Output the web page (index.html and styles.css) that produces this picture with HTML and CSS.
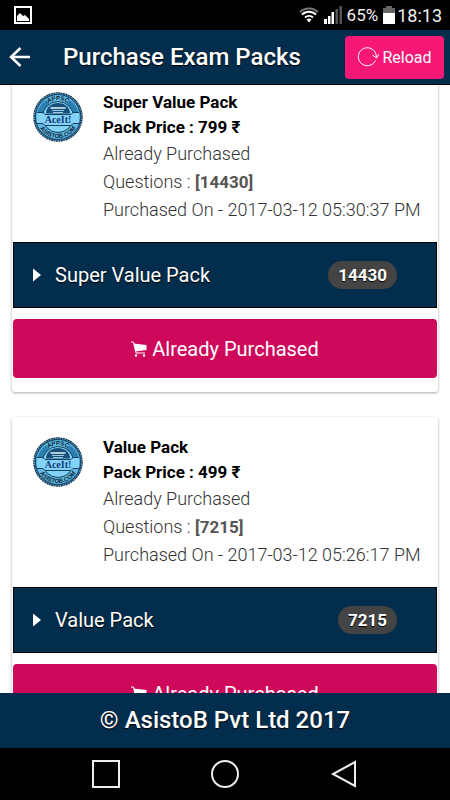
FILE: index.html
```html
<!DOCTYPE html>
<html lang="en">
<head>
    <meta charset="UTF-8">
    <title>Purchase Exam Packs</title>
    <meta name="viewport" content="width=device-width, initial-scale=1">
    <link rel="stylesheet" href="styles.css">
</head>
<body>
    <!-- shared icons -->
    <svg class="defs" aria-hidden="true">
        <defs>
            <path id="seal-top" d="M8 25a17 17 0 0 1 34 0"/>
            <path id="seal-bottom" d="M4 25a21 21 0 0 0 42 0"/>
        </defs>
        <symbol id="seal" viewBox="0 0 50 50">
            <circle cx="25" cy="25" r="23.500" fill="#174f78"/>
            <circle cx="25" cy="25" r="24" fill="none" stroke="#123e5c" stroke-width="1.500" stroke-dasharray="2 .5"/>
            <circle cx="25" cy="25" r="22" fill="#5fb9e4"/>
            <path d="M4.500 20a21 21 0 0 1 9-12l4 5a15 15 0 0 0-6 8zM45.500 20a21 21 0 0 0-9-12l-4 5a15 15 0 0 1 6 8z" fill="#2a7fb0"/>
            <circle cx="25" cy="25" r="15.500" fill="#83d3f7" stroke="#123e5c"/>
            <path d="M13 21.500a12 10.500 0 0 1 24 0z" fill="#174f78"/>
            <path d="M17.500 16h15" stroke="#e4f4fc" stroke-width="1.500"/>
            <path d="M19 18.500h12M20 20.500h10" stroke="#9cc9e2"/>
            <path d="M4 20.500h6l2 2h26l2-2h6v11h-6l-2 2H12l-2-2H4z" fill="#83d3f7"/>
            <path d="M4 20.500h6l2 2h26l2-2h6M4 31.500h6l2 2h26l2-2h6" fill="none" stroke="#123e5c"/>
        </symbol>
        <symbol id="cart" viewBox="0 0 16 16">
            <path d="M0 1h2.500l2.500 11h9" fill="none" stroke="#fff" stroke-width="1"/>
            <path d="M2.500 2.500L15.500 4v5L4.500 10.500z" fill="#fff"/>
            <circle cx="5" cy="14.500" r="1.200" fill="#fff"/>
            <circle cx="13" cy="14.500" r="1.200" fill="#fff"/>
        </symbol>
        <symbol id="caret" viewBox="0 0 8 14">
            <path d="M0 0.500v13L8 7z" fill="#fff"/>
        </symbol>
    </svg>

    <div class="status-bar">
        <svg class="picture" width="18" height="18" viewBox="0 0 18 18">
            <path d="M1 1h16v16H1z" fill="none" stroke="#fff" stroke-width="2"/>
            <path d="M3 15V10l3-3 3 3 2-1 4 4v2z" fill="#fff"/>
        </svg>
        <svg width="20" height="16" viewBox="0 0 20 16">
            <g fill="none" stroke="#fff" stroke-width="2">
                <path d="M1 5a13 13 0 0 1 18 0" stroke="#777"/>
                <path d="M3 7.500a10 10 0 0 1 14 0"/>
                <path d="M6 10.500a6 6 0 0 1 8 0"/>
            </g>
            <path d="M7.500 12.500a4 4 0 0 1 5 0L10 15.500z" fill="#fff"/>
        </svg>
        <svg class="signal" width="18" height="18" viewBox="0 0 18 18">
            <path d="M0 13h3v5H0zM4 10h2.500v8H4zM7.500 6H10v12H7.500z" fill="#fff"/>
            <path d="M11.500 3H14v15h-2.500zM15.500 0H18v18h-2.500z" fill="#555"/>
        </svg>
        <span class="percent">65%</span>
        <svg class="battery" width="12" height="18" viewBox="0 0 12 18">
            <path d="M3 0h6v2h3v5H0V2h3z" fill="#666"/>
            <path d="M0 7h12v11H0z" fill="#fff"/>
        </svg>
        <span class="time">18:13</span>
    </div>

    <header>
        <button class="back" type="button" aria-label="Back">
            <svg width="22" height="20" viewBox="0 0 22 20">
                <path d="M11.500 1L2 10l9.500 9M2 10h19" fill="none" stroke="#fff" stroke-width="2.500"/>
            </svg>
        </button>
        <h1>Purchase Exam Packs</h1>
        <button class="reload" type="button">
            <svg width="22" height="20" viewBox="0 0 22 20">
                <path d="M18.500 13.500a9 9 0 1 1 .8-4.500v2M15.500 8l4 3 2.500-4" fill="none" stroke="#fff" stroke-width="1"/>
            </svg>
            Reload
        </button>
    </header>

    <main>
        <div class="card">
            <div class="pack">
                <svg class="seal" viewBox="0 0 50 50">
                    <use href="#seal"/>
                    <text class="seal-ring"><textPath href="#seal-top" startOffset="50%">APPSC</textPath></text>
                    <text class="seal-ring"><textPath href="#seal-bottom" startOffset="50%">ASISTOB.COM</textPath></text>
                    <text class="seal-name" x="25" y="31">AceIt!</text>
                </svg>
                <div>
                    <h2>Super Value Pack</h2>
                    <h2>Pack Price : 799 ₹</h2>
                    <p>Already Purchased</p>
                    <p>Questions : <strong>[14430]</strong></p>
                    <p>Purchased On - 2017-03-12 05:30:37 PM</p>
                </div>
            </div>
            <button class="expand" type="button">
                <svg class="caret"><use href="#caret"/></svg>
                <span class="name">Super Value Pack</span>
                <span class="count">14430</span>
            </button>
            <button class="buy" type="button">
                <svg class="cart"><use href="#cart"/></svg>
                Already Purchased
            </button>
        </div>

        <div class="card">
            <div class="pack">
                <svg class="seal" viewBox="0 0 50 50">
                    <use href="#seal"/>
                    <text class="seal-ring"><textPath href="#seal-top" startOffset="50%">APPSC</textPath></text>
                    <text class="seal-ring"><textPath href="#seal-bottom" startOffset="50%">ASISTOB.COM</textPath></text>
                    <text class="seal-name" x="25" y="31">AceIt!</text>
                </svg>
                <div>
                    <h2>Value Pack</h2>
                    <h2>Pack Price : 499 ₹</h2>
                    <p>Already Purchased</p>
                    <p>Questions : <strong>[7215]</strong></p>
                    <p>Purchased On - 2017-03-12 05:26:17 PM</p>
                </div>
            </div>
            <button class="expand" type="button">
                <svg class="caret"><use href="#caret"/></svg>
                <span class="name">Value Pack</span>
                <span class="count">7215</span>
            </button>
            <button class="buy" type="button">
                <svg class="cart"><use href="#cart"/></svg>
                Already Purchased
            </button>
        </div>
    </main>

    <footer>&copy; AsistoB Pvt Ltd 2017</footer>

    <nav>
        <button type="button" aria-label="Recent apps">
            <svg width="28" height="28" viewBox="0 0 28 28"><path d="M1 1h26v26H1z"/></svg>
        </button>
        <button type="button" aria-label="Home">
            <svg width="28" height="28" viewBox="0 0 28 28"><circle cx="14" cy="14" r="13"/></svg>
        </button>
        <button type="button" aria-label="Back">
            <svg width="28" height="28" viewBox="0 0 28 28"><path d="M25 2v24L3 14z"/></svg>
        </button>
    </nav>
</body>
</html>
```
FILE: styles.css
```css
* {
    box-sizing: border-box;
}
body {
    font-family: Roboto, "Noto Sans", sans-serif;
    margin: 0;
    height: 100vh;
    display: flex;
    flex-direction: column;
    background: #fff;
    color: #444;
}
h1, h2, p {
    margin: 0;
}
button {
    font-family: inherit;
    color: #fff;
    background: none;
    border: none;
    padding: 0;
    cursor: pointer;
}
svg {
    display: block;
    flex: none;
}
.defs {
    position: absolute;
    width: 0;
    height: 0;
}

.status-bar {
    flex: none;
    height: 30px;
    padding: 0 8px 0 14px;
    display: flex;
    align-items: center;
    background: #000;
    color: #eee;
    font-size: 18px;
}
.picture {
    margin-right: auto;
}
.signal {
    margin: 0 5px;
}
.battery {
    margin: 0 2px 0 5px;
}
.percent {
    font-size: 17px;
}

header {
    flex: none;
    height: 55px;
    padding: 0 6px 0 9px;
    display: flex;
    align-items: center;
    background: #022d4c;
    border-bottom: 1px solid #000;
}
h1 {
    flex: 1;
    margin-left: 32px;
    color: #fff;
    font-size: 24px;
    font-weight: 500;
    text-shadow: 0 1px 1px #000;
}
.reload {
    display: flex;
    align-items: center;
    justify-content: center;
    gap: 3px;
    width: 99px;
    height: 43px;
    border-radius: 4px;
    background: #f71876;
    font-size: 16px;
}

/* list is scrolled a little under the header */
main {
    flex: 1;
    min-height: 0;
    overflow: hidden;
    padding: 0 12px;
}
.card {
    padding: 0 1px 14px;
    margin-bottom: 25px;
    background: #fff;
    border-radius: 3px;
    box-shadow: 0 1px 3px rgba(0,0,0,0.35);
}
.card:first-child {
    margin-top: -13px;
}
.pack {
    display: flex;
    gap: 20px;
    padding: 18px 10px 18px 20px;
}
.seal {
    width: 50px;
    height: 50px;
    margin-top: 2px;
}
.seal text {
    text-anchor: middle;
}
.seal-ring {
    font: bold 6px "Liberation Sans", sans-serif;
    fill: #0c2233;
}
.seal-name {
    font: bold 10px "Liberation Serif", serif;
    fill: #123a7a;
}
h2 {
    color: #000;
    font-size: 17px;
    font-weight: 700;
    line-height: 25px;
}
p {
    font-size: 18px;
    font-weight: 300;
    line-height: 28px;
    color: #333;
}
strong {
    font-size: 17px;
    font-weight: 700;
    color: #555;
}
.expand {
    width: 100%;
    height: 66px;
    padding: 0 39px 0 19px;
    display: flex;
    align-items: center;
    background: #022d4c;
    border: 1px solid #000;
    text-shadow: 0 1px 1px #000;
}
.caret {
    width: 8px;
    height: 14px;
}
.name {
    margin: 0 auto 0 14px;
    font-size: 20px;
}
.count {
    padding: 0 10px;
    border-radius: 14px;
    background: #444;
    font-size: 17px;
    font-weight: 700;
    line-height: 28px;
}
.buy {
    width: 100%;
    height: 59px;
    margin-top: 11px;
    display: flex;
    align-items: center;
    justify-content: center;
    gap: 5px;
    border-radius: 4px;
    background: #ce095c;
    font-size: 20px;
}
.cart {
    width: 16px;
    height: 16px;
}

footer {
    flex: none;
    height: 55px;
    line-height: 54px;
    background: #022d4c;
    color: #fff;
    font-size: 24px;
    font-weight: 500;
    text-align: center;
    text-shadow: 0 1px 1px #000;
}
nav {
    flex: none;
    height: 52px;
    display: flex;
    align-items: center;
    justify-content: center;
    gap: 91px;
    background: #000;
}
nav svg {
    fill: none;
    stroke: #eee;
    stroke-width: 2;
}
```
